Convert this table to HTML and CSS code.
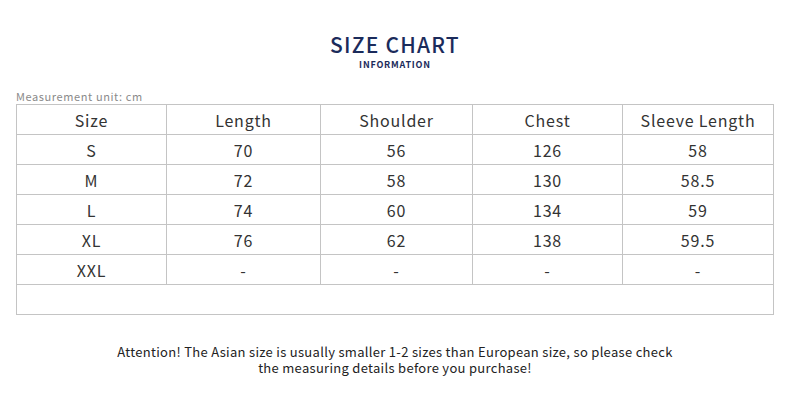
FILE: index.html
```html
<!DOCTYPE html>
<html>
<head>
<meta charset="utf-8">
<link rel="stylesheet" href="styles.css">
</head>
<body>
<div class="page">
  <header class="head">
    <h1 class="title">SIZE CHART</h1>
    <div class="sub">INFORMATION</div>
  </header>
  <div class="unit">Measurement unit: cm</div>
  <table class="chart">
    <colgroup>
      <col class="c1"><col class="c2"><col class="c3"><col class="c4"><col class="c5">
    </colgroup>
    <thead>
      <tr><th>Size</th><th>Length</th><th>Shoulder</th><th>Chest</th><th>Sleeve Length</th></tr>
    </thead>
    <tbody>
      <tr><td>S</td><td>70</td><td>56</td><td>126</td><td>58</td></tr>
      <tr><td>M</td><td>72</td><td>58</td><td>130</td><td>58.5</td></tr>
      <tr><td>L</td><td>74</td><td>60</td><td>134</td><td>59</td></tr>
      <tr><td>XL</td><td>76</td><td>62</td><td>138</td><td>59.5</td></tr>
      <tr><td>XXL</td><td>-</td><td>-</td><td>-</td><td>-</td></tr>
      <tr class="empty"><td colspan="5"></td></tr>
    </tbody>
  </table>
  <div class="note">
    <p class="line">Attention! The Asian size is usually smaller 1-2 sizes than European size, so please check</p>
    <p class="line">the measuring details before you purchase!</p>
  </div>
</div>
</body>
</html>
```
FILE: styles.css
```css
html, body {
  margin: 0;
  padding: 0;
  background: #ffffff;
}
.page {
  width: 790px;
  height: 415px;
  font-family: "Noto Sans CJK SC", "Noto Sans", sans-serif;
  color: #333;
  padding-top: 31px;
  box-sizing: border-box;
}
.head {
  display: flex;
  flex-direction: column;
  align-items: center;
}
.title {
  margin: 0;
  font-size: 21px;
  line-height: 27px;
  font-weight: 500;
  color: #1b2b5b;
  letter-spacing: 1.2px;
}
.sub {
  font-size: 9px;
  line-height: 12px;
  font-weight: 700;
  color: #1b2b5b;
  letter-spacing: 0.8px;
  margin-top: 1px;
}
.unit {
  margin: 18px 0 0 16px;
  font-size: 11px;
  line-height: 15px;
  color: #8a8a8a;
  letter-spacing: 0.6px;
}
.chart {
  margin: 0 0 0 16px;
  border-collapse: collapse;
  table-layout: fixed;
  width: 758px;
}
.c1 { width: 150px; }
.c2 { width: 154px; }
.c3 { width: 152px; }
.c4 { width: 150px; }
.c5 { width: 151px; }
.chart th, .chart td {
  border: 1px solid #c4c4c4;
  height: 29px;
  padding: 0;
  text-align: center;
  vertical-align: middle;
  font-size: 16px;
  font-weight: 400;
  color: #333;
  line-height: 20px;
  letter-spacing: 0.8px;
}
.note {
  margin-top: 29px;
  display: flex;
  flex-direction: column;
  align-items: center;
}
.line {
  margin: 0;
  text-align: center;
  font-size: 13px;
  line-height: 16px;
  height: 16px;
  color: #222;
  letter-spacing: 0.3px;
}
```
